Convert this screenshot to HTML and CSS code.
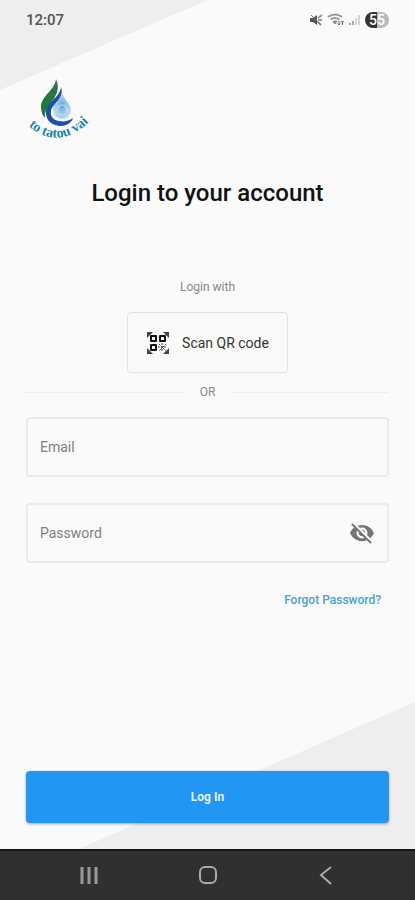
FILE: index.html
```html
<!DOCTYPE html>
<html lang="en">
<head>
<meta charset="utf-8">
<meta name="viewport" content="width=device-width, initial-scale=1">
<title>Login</title>
<link rel="stylesheet" href="styles.css">
</head>
<body>
<div class="screen">
  <header class="status">
    <time>12:07</time>
    <div class="indicators">
      <svg width="14" height="14" viewBox="0 0 14 14" aria-hidden="true">
        <path d="M1 5h3l4-3v10L4 9H1z" fill="#555"/>
        <path d="M9 5l4-3M9 7h4M9 9l3 3" stroke="#999" stroke-width="2" fill="none"/>
        <path d="M2 2l10 10" stroke="#777"/>
      </svg>
      <svg width="18" height="14" viewBox="0 0 18 14" aria-hidden="true">
        <path d="M1 4q7-5 14 0M3.500 6.500q4.500-3 9 0" stroke="#999" stroke-width="2" fill="none"/>
        <path d="M5.500 8.500q2.500-2 5 0L8 11.500z" fill="#888"/>
        <path d="M12 8v4m-1.500-1.500L12 12l1.500-1.500M15.500 12V8M14 9.500L15.500 8 17 9.500" stroke="#666" fill="none"/>
      </svg>
      <svg width="12" height="14" viewBox="0 0 12 14" aria-hidden="true">
        <path d="M0 10h2v2H0zM3 8h2v4H3z" fill="#aaa"/>
        <path d="M6 5h2v7H6zM9 2h2v10H9z" fill="#d5d5d5"/>
      </svg>
      <span class="battery">55</span>
    </div>
  </header>

  <main class="content">
    <svg class="logo" width="68" height="64" viewBox="0 0 68 64" role="img" aria-label="to tatou vai">
      <defs>
        <linearGradient id="leaf" x1="0" y1="0" x2="0" y2="1"><stop offset="0" stop-color="#36704a"/><stop offset="1" stop-color="#168030"/></linearGradient>
        <radialGradient id="drop"><stop offset="0" stop-color="#5d9fd6"/><stop offset=".4" stop-color="#8fc0e8"/><stop offset="1" stop-color="#b8dbf6"/></radialGradient>
        <path id="arc" d="M-2 44Q32 77 67 40"/>
      </defs>
      <path d="M30 1C29 12 15 18 15 29c0 5 2 9 4 11C17 27 38 19 30 1z" fill="url(#leaf)"/>
      <path d="M35 9C34 20 20 24 20 35c0 8 7 13 15 13 6 0 11-4 12-8-4 3-9 4-14 3-6-1-9-5-8-10C26 26 39 21 35 9z" fill="#1b50a6"/>
      <path d="M36 14c0 6 9 11 9 18 0 5-4 9-9 9s-9-4-9-9c0-7 9-11 9-18z" fill="url(#drop)"/>
      <circle cx="36" cy="32" r="5" fill="none" stroke="#c9e4f8"/>
      <text class="logo-text"><textPath href="#arc" startOffset="50%" text-anchor="middle">to tatou vai</textPath></text>
    </svg>

    <h1>Login to your account</h1>

    <form>
      <p class="caption">Login with</p>
      <button class="scan" type="button">
        <svg width="24" height="24" viewBox="0 0 24 24" aria-hidden="true">
          <path d="M1 1h6L1 7zM17 1h6v6zM23 17v6h-6zM7 23H1v-6z" fill="#444"/>
          <path d="M5 5h5v5H5zM14 5h5v5h-5zM5 14h5v5H5z" fill="#fafafa" stroke="#111" stroke-width="2" stroke-linejoin="round"/>
          <path d="M16 12v9M12 16h9M13 13l7 7M20 13l-7 7" stroke="#444" stroke-dasharray="2 1"/>
        </svg>
        Scan QR code
      </button>
      <div class="divider">OR</div>

      <div class="field">
        <input type="email" aria-label="Email" placeholder="Email">
      </div>
      <div class="field">
        <input type="password" aria-label="Password" placeholder="Password">
        <button class="reveal" type="button" aria-label="Show password">
          <svg width="26" height="26" viewBox="0 0 24 24" aria-hidden="true">
            <path fill="#757575" d="M12 7c2.760 0 5 2.240 5 5 0 .65-.13 1.260-.36 1.830l2.920 2.920c1.510-1.260 2.700-2.890 3.430-4.750-1.730-4.390-6-7.500-11-7.500-1.400 0-2.740.25-3.980.7l2.160 2.160C10.740 7.130 11.350 7 12 7zM2 4.270l2.280 2.280.46.46C3.080 8.300 1.780 10.020 1 12c1.730 4.390 6 7.500 11 7.500 1.550 0 3.030-.3 4.380-.84l.42.42L19.730 22 21 20.730 3.270 3 2 4.270zM7.530 9.800l1.550 1.550c-.05.21-.08.43-.08.65 0 1.660 1.340 3 3 3 .22 0 .44-.03.65-.08l1.550 1.550c-.67.33-1.410.53-2.200.53-2.760 0-5-2.240-5-5 0-.79.2-1.530.53-2.200zm4.310-.78l3.150 3.150.02-.16c0-1.660-1.340-3-3-3l-.17.01z"/>
          </svg>
        </button>
      </div>
      <a class="forgot" href="#forgot">Forgot Password?</a>
      <button class="submit" type="submit">Log In</button>
    </form>
  </main>

  <nav class="system" aria-label="System">
    <button type="button" aria-label="Recent apps">
      <svg width="20" height="20" viewBox="0 0 20 20"><path d="M3 1v17M10 1v17M17 1v17" stroke="#999" stroke-width="3"/></svg>
    </button>
    <button type="button" aria-label="Home">
      <svg width="20" height="20" viewBox="0 0 20 20"><rect x="2" y="1" width="16" height="16" rx="5" fill="none" stroke="#aaa" stroke-width="2"/></svg>
    </button>
    <button type="button" aria-label="Back">
      <svg width="20" height="20" viewBox="0 0 20 20"><path d="M15 1L5 9l10 9" fill="none" stroke="#aaa" stroke-width="2"/></svg>
    </button>
  </nav>
</div>
</body>
</html>
```
FILE: styles.css
```css
* {
  box-sizing: border-box;
}

body {
  margin: 0;
  font-family: Roboto, "Liberation Sans", sans-serif;
  color: #111;
}

button {
  padding: 0;
  border: 0;
  background: none;
  font: inherit;
  color: inherit;
}

svg {
  display: block;
}

.screen {
  position: relative;
  isolation: isolate;
  display: flex;
  flex-direction: column;
  min-height: 100vh;
  background: #fafafa;
}

.screen::before,
.screen::after {
  content: "";
  position: absolute;
  z-index: -1;
  background: #eee;
}

.screen::before {
  top: 0;
  left: 0;
  width: 50%;
  height: 90px;
  clip-path: polygon(0 0, 100% 0, 0 100%);
}

.screen::after {
  right: 0;
  bottom: 51px;
  width: 81%;
  height: 147px;
  clip-path: polygon(100% 0, 100% 100%, 0 100%);
}

.status {
  display: flex;
  align-items: center;
  justify-content: space-between;
  height: 40px;
  padding: 0 26px;
  font-size: 15px;
  font-weight: 500;
  color: #555;
}

.indicators {
  display: flex;
  align-items: center;
  gap: 4px;
}

.battery {
  width: 24px;
  border-radius: 8px;
  background: linear-gradient(90deg, #333 50%, #bbb 50%);
  color: #fff;
  font-size: 14px;
  line-height: 16px;
  text-align: center;
}

.content {
  flex: 1;
  display: flex;
  flex-direction: column;
  padding: 38px 26px 26px;
}

.logo {
  overflow: visible;
}

.logo-text {
  font: bold 14px "Liberation Serif", serif;
  fill: #168aa8;
}

h1 {
  margin: 35px 0 0;
  font-size: 24px;
  font-weight: 500;
  line-height: 32px;
  text-align: center;
}

form {
  flex: 1;
  display: flex;
  flex-direction: column;
}

.caption {
  margin: 69px 0 16px;
  font-size: 12px;
  line-height: 18px;
  color: #888;
  text-align: center;
}

.scan {
  align-self: center;
  display: flex;
  align-items: center;
  gap: 12px;
  height: 61px;
  padding: 0 18px;
  border: 1px solid #e2e2e2;
  border-radius: 4px;
  font-size: 14px;
  color: #333;
}

.divider {
  display: flex;
  align-items: center;
  gap: 16px;
  margin: 10px 0 16px;
  font-size: 12px;
  line-height: 18px;
  color: #888;
}

.divider::before,
.divider::after {
  content: "";
  flex: 1;
  height: 1px;
  background: #eee;
}

.field {
  display: flex;
  align-items: center;
  height: 60px;
  margin-bottom: 26px;
  padding: 0 12px;
  border: 2px solid #ebebeb;
  border-radius: 4px;
}

.field input {
  flex: 1;
  min-width: 0;
  height: 100%;
  padding: 0;
  border: 0;
  outline: 0;
  background: none;
  font: inherit;
  font-size: 14px;
}

.field input::placeholder {
  color: #808080;
}

.forgot {
  align-self: flex-end;
  margin: 2px 8px 24px;
  font-size: 12px;
  font-weight: 500;
  line-height: 18px;
  color: #47a3cf;
  text-decoration: none;
}

.submit {
  height: 52px;
  margin-top: auto;
  border-radius: 4px;
  background: #2196f3;
  box-shadow: 0 1px 3px #0005;
  color: #e8f4ff;
  font-size: 12px;
  font-weight: 700;
}

.system {
  display: flex;
  align-items: center;
  justify-content: space-between;
  height: 51px;
  padding: 0 19%;
  border-top: 2px solid #161616;
  background: #303030;
}
```
